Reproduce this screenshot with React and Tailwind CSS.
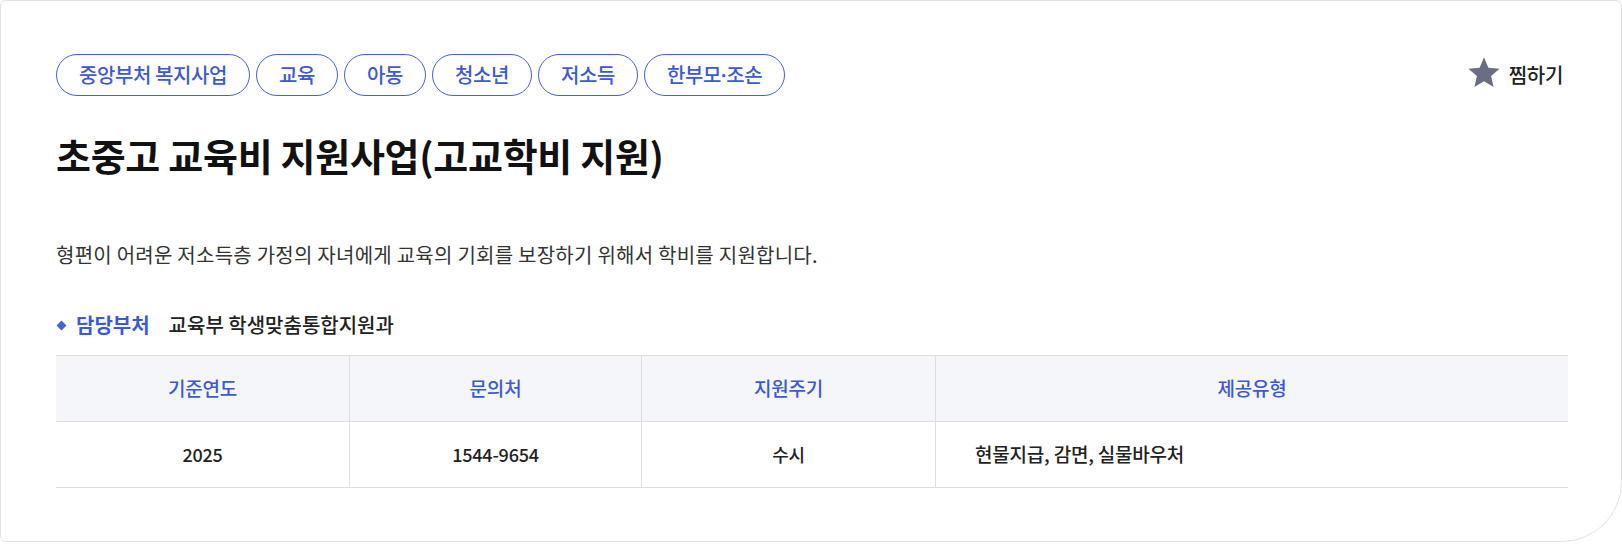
import React from "react";

const tags = ["중앙부처 복지사업", "교육", "아동", "청소년", "저소득"];
const font = { fontFamily: '"Noto Sans CJK KR", "Noto Sans", sans-serif' };
const tagCls =
  "h-[42px] flex items-center rounded-full border border-[#4562d6] text-[#3c5ad4] px-[22px] text-[20px] font-medium tracking-[-0.4px]";

export default function App() {
  return (
    <div style={font} className="w-[1622px] h-[544px] bg-white">
      <div className="w-[1622px] h-[542px] border border-[#e2e2e2] rounded-[6px] rounded-br-[60px] pl-[55px] pr-[53px] pt-[53px] bg-white">
        <div className="flex items-center justify-between">
          <div className="flex gap-[6px]">
            {tags.map((t) => (
              <span key={t} className={tagCls}>
                {t}
              </span>
            ))}
            <span className={tagCls}>
              한부모<span className="-mx-[3px]">·</span>조손
            </span>
          </div>
          <button className="flex items-center gap-[8px] text-[20px] text-[#222] font-medium mr-[5px] tracking-[-0.3px]">
            <svg width="34" height="33" viewBox="0 0 24 23" className="-mt-[6px]">
              <path
                d="M12 0.8l3.1 7.3 7.9 0.7-6 5.2 1.8 7.8L12 17.7l-6.8 4.1 1.8-7.8-6-5.2 7.9-0.7z"
                fill="#6b6e82"
              />
            </svg>
            <span>찜하기</span>
          </button>
        </div>
        <h1 className="mt-[34px] text-[38px] leading-[50px] font-bold text-[#111] tracking-[-0.3px]">
          초중고 교육비 지원사업(고교학비 지원)
        </h1>
        <p className="mt-[60px] text-[20px] leading-[30px] text-[#333] tracking-[0.25px]">
          형편이 어려운 저소득층 가정의 자녀에게 교육의 기회를 보장하기 위해서 학비를 지원합니다.
        </p>
        <div className="mt-[40px] flex items-center h-[30px] text-[20px] tracking-[0px]">
          <span className="w-[7px] h-[7px] bg-[#4562d6] rotate-45 ml-[2px] mr-[11px]"></span>
          <span className="text-[#3c5ad4] font-bold">담당부처</span>
          <span className="ml-[19px] text-[#222] font-medium">교육부 학생맞춤통합지원과</span>
        </div>
        <div className="mt-[15px] w-[1512px] border-t border-[#dedede] text-[18px] tracking-[-0.2px]">
          <div className="grid grid-cols-[293px_292px_294px_1fr] h-[66px] bg-[#f5f6fa] border-b border-[#dedede] text-[#3c5ad4] font-medium text-[19px]">
            <div className="flex items-center justify-center">기준연도</div>
            <div className="flex items-center justify-center border-l border-[#dedede]">문의처</div>
            <div className="flex items-center justify-center border-l border-[#dedede]">지원주기</div>
            <div className="flex items-center justify-center border-l border-[#dedede]">제공유형</div>
          </div>
          <div className="grid grid-cols-[293px_292px_294px_1fr] h-[66px] border-b border-[#dedede] text-[#222] font-medium">
            <div className="flex items-center justify-center">2025</div>
            <div className="flex items-center justify-center border-l border-[#dedede]">1544-9654</div>
            <div className="flex items-center justify-center border-l border-[#dedede]">수시</div>
            <div className="flex items-center pl-[39px] border-l border-[#dedede] text-[19px]">현물지급, 감면, 실물바우처</div>
          </div>
        </div>
      </div>
    </div>
  );
}
